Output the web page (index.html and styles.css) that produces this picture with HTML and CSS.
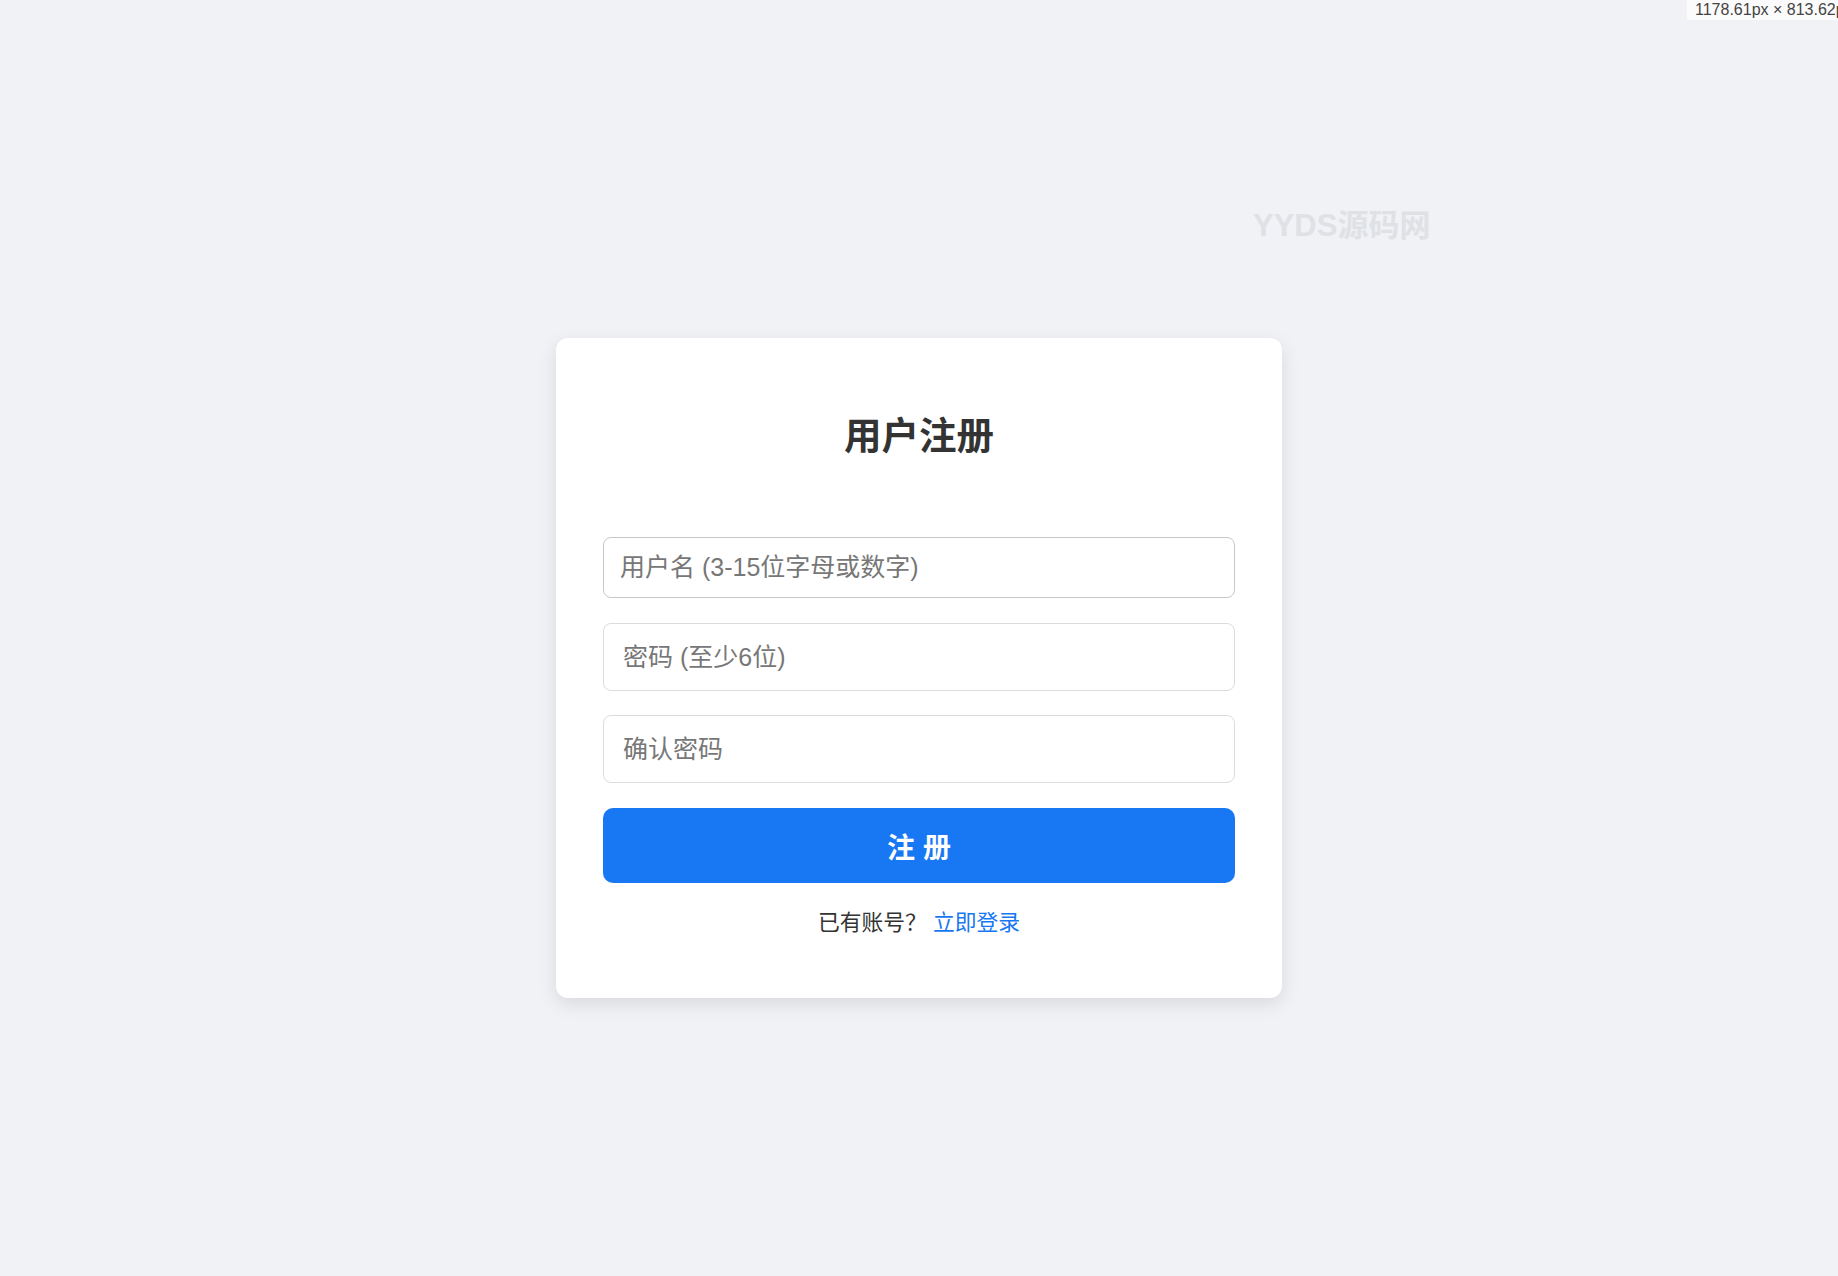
FILE: index.html
```html
<!DOCTYPE html>
<html lang="zh-CN">
<head>
<meta charset="UTF-8">
<title>用户注册</title>
<link rel="stylesheet" href="styles.css">
</head>
<body>
<div class="watermark">YYDS源码网</div>
<div class="size-tag">1178.61px × 813.62px</div>
<main class="page">
  <section class="card">
    <h2 class="title">用户注册</h2>
    <form class="form">
      <input class="field field-first" type="text" placeholder="用户名 (3-15位字母或数字)">
      <input class="field" type="password" placeholder="密码 (至少6位)">
      <input class="field" type="password" placeholder="确认密码">
      <button class="submit" type="button">注 册</button>
    </form>
    <p class="footer">已有账号？<a class="link" href="#">立即登录</a></p>
  </section>
</main>
</body>
</html>
```

FILE: styles.css
```css
* {
  box-sizing: border-box;
}

html, body {
  margin: 0;
  padding: 0;
}

body {
  background: #f0f2f5;
  font-family: "Liberation Sans", "Noto Sans CJK SC", sans-serif;
  color: #333;
  min-height: 100vh;
  position: relative;
}

.watermark {
  position: absolute;
  left: 1253px;
  top: 206px;
  font-size: 31px;
  line-height: 40px;
  font-weight: 700;
  color: #dfe1e5;
  white-space: nowrap;
}

.size-tag {
  position: absolute;
  left: 1687px;
  top: 0;
  padding: 0 0 0 8px;
  width: 151px;
  overflow: hidden;
  white-space: nowrap;
  background: #fbfbfb;
  color: #444;
  font-size: 16px;
  line-height: 20px;
  height: 20px;
  font-family: "Liberation Sans", sans-serif;
}

.page {
  display: flex;
  justify-content: center;
  padding-top: 338px;
}

.card {
  width: 726px;
  background: #fff;
  border-radius: 12px;
  padding: 47px;
  box-shadow: 0 6px 19px rgba(0, 0, 0, 0.1);
}

.title {
  margin: 29px 0 78px;
  text-align: center;
  font-size: 37.5px;
  line-height: 45px;
  font-weight: 700;
  color: #333;
}

.form {
  display: flex;
  flex-direction: column;
  margin: 0;
}

.field {
  display: block;
  width: 100%;
  height: 68px;
  padding: 0 19px;
  border: 1.5px solid #dcdcdc;
  border-radius: 8px;
  font-family: inherit;
  font-size: 25px;
  color: #333;
  background: #fff;
  outline: none;
  margin: 0 0 24px;
}

.field-first {
  height: 61px;
  padding: 0 16px;
  border-color: #c8c8c8;
  margin-bottom: 25px;
}

.field:last-of-type {
  margin-bottom: 25px;
}

.field::placeholder {
  color: #777;
}

.submit {
  display: block;
  width: 100%;
  height: 75px;
  border: none;
  border-radius: 10px;
  background: #1877f2;
  color: #fff;
  font-family: inherit;
  font-size: 28px;
  font-weight: 700;
  cursor: pointer;
}

.footer {
  margin: 25px 0 13px;
  text-align: center;
  font-size: 21.8px;
  line-height: 30px;
  color: #333;
}

.link {
  color: #1877f2;
  text-decoration: none;
  margin-left: 6px;
}
```
